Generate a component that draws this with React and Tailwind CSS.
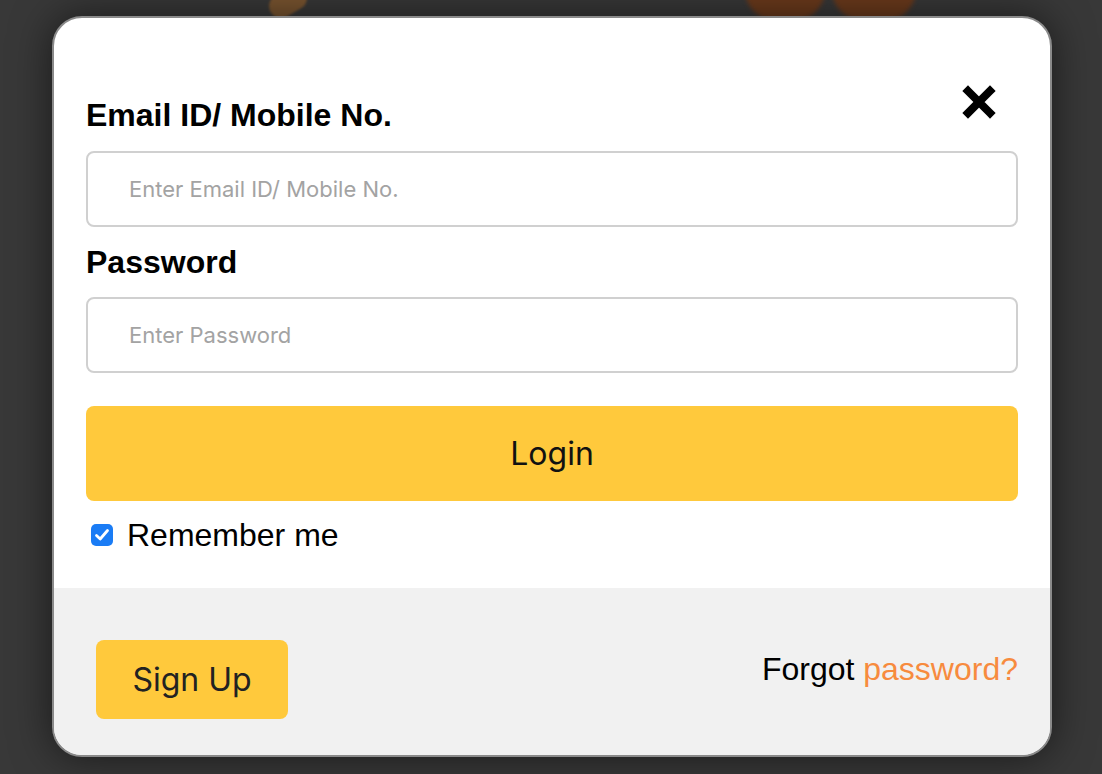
import React, { useState } from 'react';

const arial = { fontFamily: '"Liberation Sans", Arial, sans-serif' };
const ui = { fontFamily: 'Inter, "Noto Sans", sans-serif' };

function CloseIcon() {
  return (
    <svg width="36" height="36" viewBox="0 0 36 36">
      <path d="M7 7 L29 29 M29 7 L7 29" stroke="#000" strokeWidth="8" strokeLinecap="square" />
    </svg>
  );
}

function CheckBox({ checked, onChange }) {
  return (
    <button
      type="button"
      onClick={() => onChange(!checked)}
      className={`flex h-[22px] w-[22px] items-center justify-center rounded-[5px] ${checked ? 'bg-[#1a7cf5]' : 'border border-gray-400 bg-white'}`}
    >
      {checked && (
        <svg width="18" height="18" viewBox="0 0 18 18">
          <path d="M3.5 9.5 L7.2 13 L14.5 4.5" stroke="#fff" strokeWidth="2.8" fill="none" strokeLinecap="round" strokeLinejoin="round" />
        </svg>
      )}
    </button>
  );
}

export default function App() {
  const [email, setEmail] = useState('');
  const [password, setPassword] = useState('');
  const [remember, setRemember] = useState(true);

  return (
    <div className="relative h-screen w-full overflow-hidden bg-[#383838]">
      {/* blurred page behind the modal */}
      <div className="absolute left-[745px] top-[-40px] h-[60px] w-[80px] rounded-full bg-[#6b3a1c] blur-[2px]" />
      <div className="absolute left-[832px] top-[-40px] h-[60px] w-[84px] rounded-full bg-[#6b3a1c] blur-[2px]" />
      <div className="absolute left-[268px] top-[-10px] h-[24px] w-[40px] rotate-[-30deg] rounded-full bg-[#7a5530] blur-[1px]" />

      <div className="relative flex pl-[52px] pt-[16px]">
        <div className="relative flex h-[741px] w-[1000px] flex-col overflow-hidden rounded-[30px] border-2 border-[#8a8a8a] bg-white shadow-[0_0_40px_rgba(0,0,0,0.55)]">
          <button type="button" className="absolute right-[53px] top-[66px]">
            <CloseIcon />
          </button>

          <div className="flex flex-1 flex-col px-[32px] pt-[79px]">
            <label className="text-[32px] font-bold leading-[36px] text-black" style={arial}>
              Email ID/ Mobile No.
            </label>
            <input
              type="text"
              value={email}
              onChange={(e) => setEmail(e.target.value)}
              placeholder="Enter Email ID/ Mobile No."
              className="mt-[18px] h-[76px] w-full rounded-[8px] border-2 border-[#d0d0d0] px-[41px] text-[22px] text-black outline-none placeholder:text-[#a3a3a3]"
              style={ui}
            />

            <label className="mt-[17px] text-[32px] font-bold leading-[36px] text-black" style={arial}>
              Password
            </label>
            <input
              type="password"
              value={password}
              onChange={(e) => setPassword(e.target.value)}
              placeholder="Enter Password"
              className="mt-[17px] h-[76px] w-full rounded-[8px] border-2 border-[#d0d0d0] px-[41px] text-[22px] text-black outline-none placeholder:text-[#a3a3a3]"
              style={ui}
            />

            <button
              type="button"
              className="mt-[33px] h-[95px] w-full rounded-[8px] bg-[#ffc93c] text-[32px] text-[#111]"
              style={ui}
            >
              Login
            </button>

            <div className="mt-[16px] flex items-center gap-[14px] pl-[5px]">
              <CheckBox checked={remember} onChange={setRemember} />
              <span className="text-[32px] leading-[36px] text-black" style={arial}>Remember me</span>
            </div>
          </div>

          <div className="flex h-[167px] items-start justify-between bg-[#f1f1f1] pl-[42px] pr-[32px] pt-[52px]">
            <button
              type="button"
              className="h-[79px] w-[192px] rounded-[8px] bg-[#ffc93c] text-[32px] text-[#222]"
              style={ui}
            >
              Sign Up
            </button>
            <div className="mt-[11px] text-[32px] leading-[36px] text-black" style={arial}>
              Forgot <a href="#" className="text-[#f78b3e]">password?</a>
            </div>
          </div>
        </div>
      </div>
    </div>
  );
}
